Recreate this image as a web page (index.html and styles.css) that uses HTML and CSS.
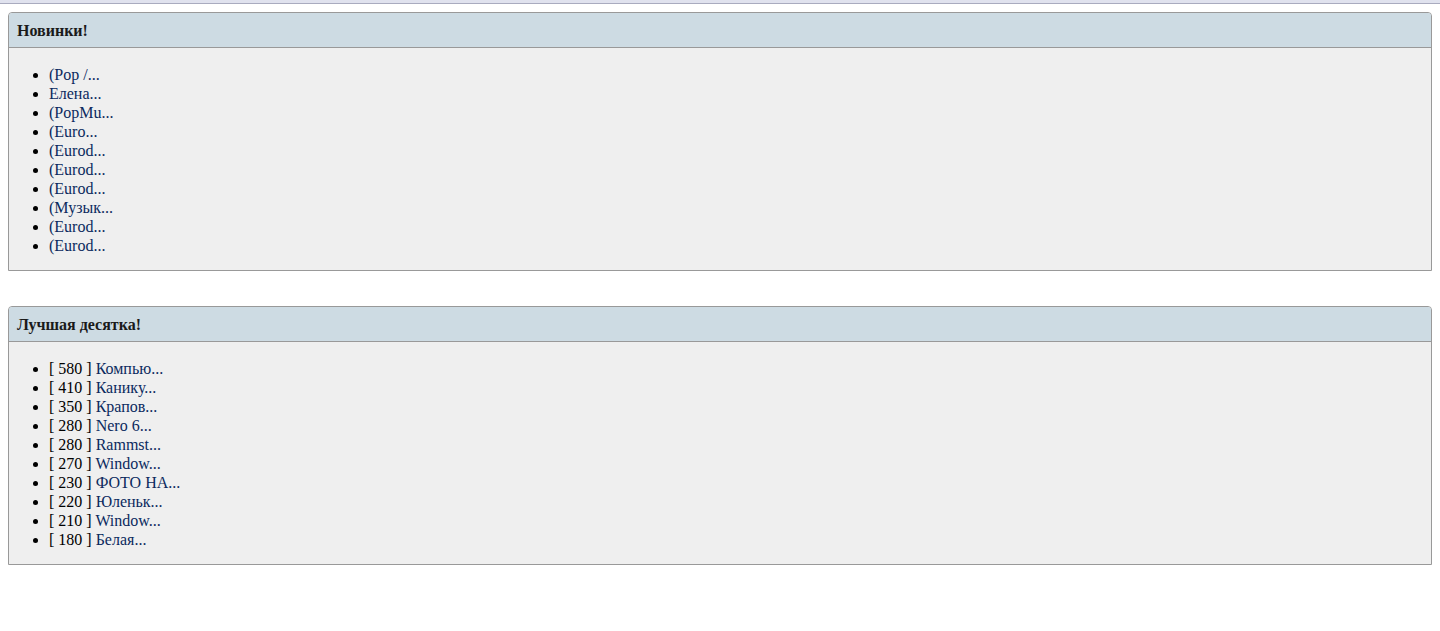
FILE: index.html
```html
<!DOCTYPE html>
<html lang="ru">
<head>
    <meta charset="UTF-8">
    <title>Новинки</title>
    <link rel="stylesheet" href="styles.css">
</head>
<body>
    <div class="topbar"></div>

    <div class="block">
        <div class="block-title">Новинки!</div>
        <div class="block-body">
            <ul>
                <li><a href="#">(Pop /...</a></li>
                <li><a href="#">Елена...</a></li>
                <li><a href="#">(PopMu...</a></li>
                <li><a href="#">(Euro...</a></li>
                <li><a href="#">(Eurod...</a></li>
                <li><a href="#">(Eurod...</a></li>
                <li><a href="#">(Eurod...</a></li>
                <li><a href="#">(Музык...</a></li>
                <li><a href="#">(Eurod...</a></li>
                <li><a href="#">(Eurod...</a></li>
            </ul>
        </div>
    </div>

    <div class="block">
        <div class="block-title">Лучшая десятка!</div>
        <div class="block-body">
            <ul>
                <li>[ 580 ] <a href="#">Компью...</a></li>
                <li>[ 410 ] <a href="#">Канику...</a></li>
                <li>[ 350 ] <a href="#">Крапов...</a></li>
                <li>[ 280 ] <a href="#">Nero 6...</a></li>
                <li>[ 280 ] <a href="#">Rammst...</a></li>
                <li>[ 270 ] <a href="#">Window...</a></li>
                <li>[ 230 ] <a href="#">ФОТО НА...</a></li>
                <li>[ 220 ] <a href="#">Юленьк...</a></li>
                <li>[ 210 ] <a href="#">Window...</a></li>
                <li>[ 180 ] <a href="#">Белая...</a></li>
            </ul>
        </div>
    </div>
</body>
</html>
```

FILE: styles.css
```css
body {
    margin: 0;
    padding: 0 8px;
    font-family: "Liberation Serif", "Times New Roman", serif;
    font-size: 16px;
    color: #000;
    background-color: #fff;
}

.topbar {
    height: 3px;
    background-color: #e0e2ee;
    border-bottom: 1px solid #a9abbf;
    margin: 0 -8px 8px;
}

.block {
    border: 1px solid #999;
    border-radius: 4px 4px 0 0;
    background-color: #efefef;
    margin-bottom: 35px;
}

.block-title {
    background-color: #cddbe3;
    border-bottom: 1px solid #999;
    border-radius: 3px 3px 0 0;
    padding: 0 8px;
    height: 34px;
    line-height: 36px;
    font-size: 16px;
    font-weight: bold;
    color: #1a1a1a;
}

.block-body ul {
    margin: 17px 0 15px;
    padding-left: 40px;
    line-height: 19px;
}

.block-body a {
    color: #0b2a5e;
    text-decoration: none;
}
```
